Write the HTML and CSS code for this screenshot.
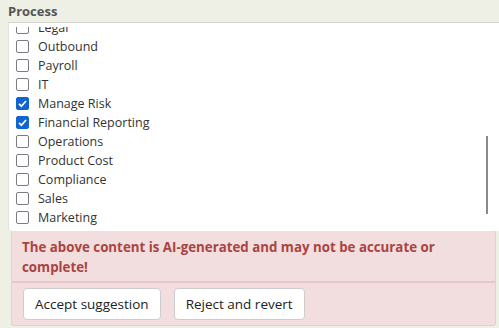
FILE: index.html
```html
<!DOCTYPE html>
<html>
<head>
  <meta charset="UTF-8" />
  <title>Process</title>
  <link rel="stylesheet" href="styles.css">
</head>
<body>
  <div class="field">
    <div class="field-label">Process</div>
    <div class="list-box">
      <div class="list-viewport">
        <ul class="option-list">
          <li><span class="box"></span>Legal</li>
          <li><span class="box"></span>Outbound</li>
          <li><span class="box"></span>Payroll</li>
          <li><span class="box"></span>IT</li>
          <li><span class="box checked"><svg viewBox="0 0 13 13"><path d="M3 6.8 L5.4 9.2 L10 4" /></svg></span>Manage Risk</li>
          <li><span class="box checked"><svg viewBox="0 0 13 13"><path d="M3 6.8 L5.4 9.2 L10 4" /></svg></span>Financial Reporting</li>
          <li><span class="box"></span>Operations</li>
          <li><span class="box"></span>Product Cost</li>
          <li><span class="box"></span>Compliance</li>
          <li><span class="box"></span>Sales</li>
          <li><span class="box"></span>Marketing</li>
        </ul>
      </div>
      <div class="scroll-thumb"></div>
    </div>

    <div class="ai-alert">
      <div class="ai-text">The above content is AI-generated and may not be accurate or complete!</div>
      <div class="ai-actions">
        <button class="btn">Accept suggestion</button>
        <button class="btn">Reject and revert</button>
      </div>
    </div>
  </div>
</body>
</html>
```

FILE: styles.css
```css
body {
  margin: 0;
  background: #eef0e6;
  font-family: 'Open Sans', 'Noto Sans', sans-serif;
  overflow: hidden;
}

.field {
  padding: 2px 0 0 8px;
}

.field-label {
  font-size: 13px;
  font-weight: bold;
  color: #555;
  line-height: 18px;
  height: 20px;
}

.list-box {
  position: relative;
  background: #fff;
  border-top: 1px solid #d4d6cf;
  border-left: 1px solid #e2e4dc;
  border-bottom-left-radius: 4px;
  padding-top: 4px;
  height: 204px;
}

.list-viewport {
  height: 203px;
  overflow: hidden;
}

.option-list {
  list-style: none;
  margin: -9px 0 0 0;
  padding: 0;
}

.option-list li {
  display: flex;
  align-items: center;
  height: 19px;
  padding-left: 7px;
  font-size: 12.5px;
  color: #333;
}

.box {
  box-sizing: border-box;
  width: 13px;
  height: 13px;
  border: 1.5px solid #7d7a84;
  border-radius: 2px;
  margin-right: 9px;
  display: flex;
  align-items: center;
  justify-content: center;
  background: #fff;
}

.box.checked {
  background: #0f64d2;
  border-color: #0f64d2;
}

.box svg {
  width: 13px;
  height: 13px;
  flex-shrink: 0;
}

.box svg path {
  fill: none;
  stroke: #fff;
  stroke-width: 1.7;
}

.scroll-thumb {
  position: absolute;
  right: 11px;
  top: 113px;
  width: 2px;
  height: 78px;
  background: #8a8a8a;
}

.ai-alert {
  margin: 0 3px 0 3px;
  background: #f2dede;
  border: 1px solid #ebccd1;
  border-top: none;
  border-radius: 0 0 3px 3px;
}

.ai-text {
  padding: 6px 10px 4px 10px;
  font-size: 13.3px;
  font-weight: bold;
  color: #a94442;
  line-height: 20px;
  border-bottom: 2px solid #e8c6ca;
}

.ai-actions {
  display: flex;
  gap: 13px;
  padding: 5px 11px 5px 11px;
}

.btn {
  background: #fff;
  border: 1px solid #ccc;
  border-radius: 4px;
  font-family: 'Open Sans', 'Noto Sans', sans-serif;
  font-size: 13.5px;
  color: #222;
  height: 32px;
  padding: 0 11px;
}
```
